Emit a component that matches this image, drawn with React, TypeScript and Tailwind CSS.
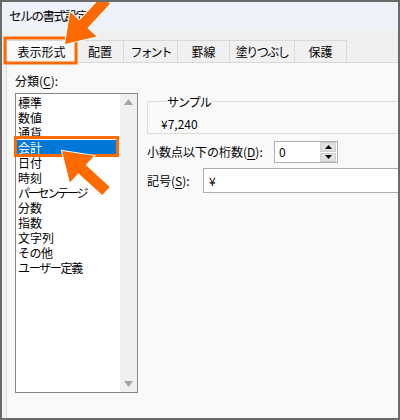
import React from "react";

const CATEGORIES = [
  { label: "標準" },
  { label: "数値" },
  { label: "通貨" },
  { label: "会計", selected: true },
  { label: "日付" },
  { label: "時刻" },
  { label: "パーセンテージ", tight: "tracking-[-2.2px]" },
  { label: "分数" },
  { label: "指数" },
  { label: "文字列" },
  { label: "その他", tight: "tracking-[-0.5px]" },
  { label: "ユーザー定義", tight: "tracking-[-1.3px]" },
];

const TABS = [
  { label: "表示形式", w: "w-[71px]", active: true },
  { label: "配置", w: "w-[48px]" },
  { label: "フォント", w: "w-[55px]", tight: "tracking-[-2px]" },
  { label: "罫線", w: "w-[53px]" },
  { label: "塗りつぶし", w: "w-[66px]", tight: "tracking-[-1.5px]" },
  { label: "保護", w: "w-[53px]" },
];

// build a filled arrow polygon from tail to tip
const arrowPoints = (
  tx: number,
  ty: number,
  px: number,
  py: number,
  shaft = 11,
  headW = 36,
  headL = 27
) => {
  const dx = px - tx;
  const dy = py - ty;
  const len = Math.hypot(dx, dy);
  const ux = dx / len;
  const uy = dy / len;
  const nx = -uy;
  const ny = ux;
  const bx = px - ux * headL;
  const by = py - uy * headL;
  const pts = [
    [tx + (nx * shaft) / 2, ty + (ny * shaft) / 2],
    [bx + (nx * shaft) / 2, by + (ny * shaft) / 2],
    [bx + (nx * headW) / 2, by + (ny * headW) / 2],
    [px, py],
    [bx - (nx * headW) / 2, by - (ny * headW) / 2],
    [bx - (nx * shaft) / 2, by - (ny * shaft) / 2],
    [tx - (nx * shaft) / 2, ty - (ny * shaft) / 2],
  ];
  return pts.map((p) => p.join(",")).join(" ");
};

const Arrow = ({ tail, tip }: { tail: [number, number]; tip: [number, number] }) => (
  <polygon
    points={arrowPoints(tail[0], tail[1], tip[0], tip[1])}
    fill="#ff6a00"
    stroke="#ffffff"
    strokeWidth={2}
    strokeLinejoin="miter"
    style={{ paintOrder: "stroke" }}
  />
);

export default function App() {
  return (
    <div className="relative w-[400px] h-[420px] overflow-hidden border-2 border-[#6b6b6b] bg-[#f0f0f0] text-black text-[12px] font-['Noto_Sans_CJK_JP','Noto_Sans',sans-serif]">
      {/* title bar */}
      <div className="h-[28px] bg-gradient-to-b from-[#eef2fa] to-[#eff2f8] flex items-center pl-[7px] text-[12.5px] leading-none tracking-[-1.3px]">
        セルの書式設定
      </div>

      {/* tabs */}
      <div className="flex pl-[4px] pt-[10px]">
        {TABS.map((t) => (
          <div
            key={t.label}
            className={`${t.w} h-[22px] flex items-center justify-center border border-b-0 border-[#d9d9d9] -ml-px first:ml-0 leading-none ${
              t.tight ?? ""
            } ${t.active ? "bg-[#f9f9f9]" : "bg-[#f0f0f0]"}`}
          >
            {t.label}
          </div>
        ))}
      </div>

      {/* panel */}
      <div className="ml-[4px] h-[360px] border-l border-t border-[#d9d9d9] bg-[#f9f9f9] flex pl-[8px] pt-[10px]">
        {/* left: categories */}
        <div className="w-[123px] shrink-0 flex flex-col">
          <div className="leading-[15px] h-[15px]">
            分類(<span className="underline underline-offset-2">C</span>):
          </div>
          <div className="mt-[5px] h-[300px] border border-[#828790] bg-white flex">
            <div className="flex-1 pt-[1px] pl-[1px] pr-[3px]">
              {CATEGORIES.map((c) => (
                <div
                  key={c.label}
                  className={`h-[15px] leading-[15px] pl-[1px] whitespace-nowrap ${c.tight ?? ""} ${
                    c.selected ? "bg-[#0078d7] text-white" : ""
                  }`}
                >
                  {c.label}
                </div>
              ))}
            </div>
            <div className="w-[17px] bg-[#f0f0f0] flex flex-col justify-between items-center py-[5px]">
              <svg width="9" height="6" viewBox="0 0 9 6">
                <polygon points="4.5,0 9,6 0,6" fill="#a3a3a3" />
              </svg>
              <svg width="9" height="6" viewBox="0 0 9 6">
                <polygon points="0,0 9,0 4.5,6" fill="#a3a3a3" />
              </svg>
            </div>
          </div>
        </div>

        {/* right: sample + options */}
        <div className="ml-[9px] w-[300px] shrink-0 flex flex-col pt-[21px]">
          <fieldset className="h-[40px] border border-[#dcdcdc] pl-[13px]">
            <legend className="ml-[5px] px-[1px] leading-[15px] tracking-[-1px]">サンプル</legend>
            <div className="leading-[15px] mt-[7px]">¥7,240</div>
          </fieldset>

          <div className="mt-[7px] flex items-center h-[22px]">
            <span className="w-[127px] leading-none whitespace-nowrap">
              小数点以下の桁数(<span className="underline underline-offset-2">D</span>):
            </span>
            <div className="w-[64px] h-[22px] border border-[#adadad] bg-white flex items-center">
              <span className="flex-1 pl-[4px] leading-none">0</span>
              <div className="w-[16px] h-[20px] flex flex-col gap-[1px] mr-[1px]">
                <div className="flex-1 bg-[#e1e1e1] border border-[#cfcfcf] flex items-center justify-center">
                  <svg width="7" height="4" viewBox="0 0 7 4">
                    <polygon points="3.5,0 7,4 0,4" fill="#000" />
                  </svg>
                </div>
                <div className="flex-1 bg-[#e1e1e1] border border-[#cfcfcf] flex items-center justify-center">
                  <svg width="7" height="4" viewBox="0 0 7 4">
                    <polygon points="0,0 7,0 3.5,4" fill="#000" />
                  </svg>
                </div>
              </div>
            </div>
          </div>

          <div className="mt-[5px] flex items-center h-[25px]">
            <span className="w-[56px] leading-none">
              記号(<span className="underline underline-offset-2">S</span>):
            </span>
            <div className="flex-1 h-[25px] border border-[#adadad] bg-white flex items-center pl-[5px] leading-none">
              ¥
            </div>
          </div>
        </div>
      </div>

      {/* annotation overlay */}
      <svg
        className="absolute left-[-2px] top-[-2px] pointer-events-none"
        width="400"
        height="420"
        viewBox="0 0 400 420"
      >
        <rect x="5" y="38" width="71" height="25" fill="none" stroke="#ff6a00" strokeWidth="3" />
        <rect x="15.5" y="137.5" width="102" height="18" fill="none" stroke="#ff6a00" strokeWidth="3" />
        <Arrow tail={[106, 0]} tip={[65, 44]} />
        <Arrow tail={[106, 191]} tip={[62, 151]} />
      </svg>
    </div>
  );
}
